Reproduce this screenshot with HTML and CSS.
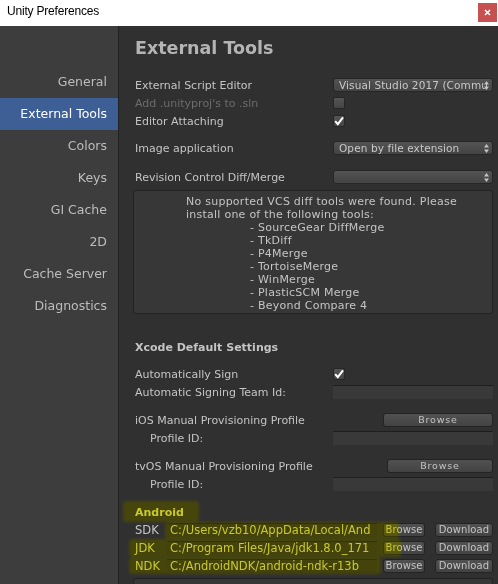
FILE: index.html
```html
<!DOCTYPE html>
<html>
<head>
<meta charset="utf-8">
<title>Unity Preferences</title>
<link rel="stylesheet" href="styles.css">
</head>
<body>
<div class="window">
  <div class="titlebar">
    <span class="title">Unity Preferences</span>
    <div class="close"><svg width="7" height="7" viewBox="0 0 7 7"><path d="M1 1L6 6M6 1L1 6" stroke="#fff" stroke-width="1.6"/></svg></div>
  </div>
  <div class="main">
    <nav class="sidebar">
      <div class="nav">General</div>
      <div class="nav active">External Tools</div>
      <div class="nav">Colors</div>
      <div class="nav">Keys</div>
      <div class="nav">GI Cache</div>
      <div class="nav">2D</div>
      <div class="nav">Cache Server</div>
      <div class="nav">Diagnostics</div>
    </nav>
    <section class="content">
      <h1 class="heading">External Tools</h1>

      <div class="row first">
        <span class="label">External Script Editor</span>
        <div class="ctrl"><div class="popup">Visual Studio 2017 (Commu<svg class="arrows" width="5" height="9" viewBox="0 0 5 9"><path d="M2.5 0L5 3.5H0Z M2.5 9L5 5.5H0Z" fill="#c4c4c4"/></svg></div></div>
      </div>
      <div class="row">
        <span class="label disabled">Add .unityproj's to .sln</span>
        <div class="ctrl"><div class="check"></div></div>
      </div>
      <div class="row">
        <span class="label">Editor Attaching</span>
        <div class="ctrl"><div class="check"><svg width="12" height="12" viewBox="0 0 12 12"><path d="M2.2 6.2L4.8 9.2L10 2.4" stroke="#fff" stroke-width="2" fill="none"/></svg></div></div>
      </div>

      <div class="row gap9">
        <span class="label">Image application</span>
        <div class="ctrl"><div class="popup">Open by file extension<svg class="arrows" width="5" height="9" viewBox="0 0 5 9"><path d="M2.5 0L5 3.5H0Z M2.5 9L5 5.5H0Z" fill="#c4c4c4"/></svg></div></div>
      </div>
      <div class="row gap11">
        <span class="label">Revision Control Diff/Merge</span>
        <div class="ctrl"><div class="popup"><svg class="arrows" width="5" height="9" viewBox="0 0 5 9"><path d="M2.5 0L5 3.5H0Z M2.5 9L5 5.5H0Z" fill="#c4c4c4"/></svg></div></div>
      </div>

      <div class="helpbox">
        <div>No supported VCS diff tools were found. Please</div>
        <div>install one of the following tools:</div>
        <div class="tool">- SourceGear DiffMerge</div>
        <div class="tool">- TkDiff</div>
        <div class="tool">- P4Merge</div>
        <div class="tool">- TortoiseMerge</div>
        <div class="tool">- WinMerge</div>
        <div class="tool">- PlasticSCM Merge</div>
        <div class="tool">- Beyond Compare 4</div>
      </div>

      <div class="row section-title xcode">Xcode Default Settings</div>
      <div class="row gap9">
        <span class="label">Automatically Sign</span>
        <div class="ctrl"><div class="check"><svg width="12" height="12" viewBox="0 0 12 12"><path d="M2.2 6.2L4.8 9.2L10 2.4" stroke="#fff" stroke-width="2" fill="none"/></svg></div></div>
      </div>
      <div class="row">
        <span class="label">Automatic Signing Team Id:</span>
        <div class="ctrl"><div class="field"></div></div>
      </div>
      <div class="row gap10">
        <span class="label">iOS Manual Provisioning Profile</span>
        <div class="ctrl"><div class="button browse-ios">Browse</div></div>
      </div>
      <div class="row">
        <span class="label indent">Profile ID:</span>
        <div class="ctrl"><div class="field"></div></div>
      </div>
      <div class="row gap10">
        <span class="label">tvOS Manual Provisioning Profile</span>
        <div class="ctrl"><div class="button browse-tvos">Browse</div></div>
      </div>
      <div class="row">
        <span class="label indent">Profile ID:</span>
        <div class="ctrl"><div class="field"></div></div>
      </div>

      <div class="row section-title gap10">Android</div>
      <div class="row">
        <span class="alabel">SDK</span>
        <div class="field path">C:/Users/vzb10/AppData/Local/And</div>
        <div class="button small browse">Browse</div>
        <div class="button small download">Download</div>
      </div>
      <div class="row">
        <span class="alabel">JDK</span>
        <div class="field path">C:/Program Files/Java/jdk1.8.0_171</div>
        <div class="button small browse">Browse</div>
        <div class="button small download">Download</div>
      </div>
      <div class="row">
        <span class="alabel">NDK</span>
        <div class="field path">C:/AndroidNDK/android-ndk-r13b</div>
        <div class="button small browse">Browse</div>
        <div class="button small download">Download</div>
      </div>
      <div class="bottombox"></div>
    </section>
  </div>

  <div class="highlights">
    <div class="hl hl-title"></div>
    <div class="hl hl-sdk"></div>
    <div class="hl hl-jdk"></div>
    <div class="hl hl-ndk"></div>
  </div>
</div>
</body>
</html>
```

FILE: styles.css
```css
html, body {
  margin: 0;
  padding: 0;
  background: #303030;
}
.window {
  position: relative;
  width: 498px;
  height: 584px;
  overflow: hidden;
  font-family: "DejaVu Sans", "Liberation Sans", sans-serif;
}
.titlebar {
  height: 26px;
  background: #ffffff;
  display: flex;
  align-items: flex-start;
  justify-content: space-between;
  padding-left: 7px;
  padding-right: 1px;
}
.title {
  font-family: "Liberation Sans", sans-serif;
  font-size: 12px;
  letter-spacing: -0.2px;
  color: #000;
  line-height: 22px;
}
.close {
  margin-top: 3px;
  width: 19px;
  height: 19px;
  background: #c75050;
  display: flex;
  align-items: center;
  justify-content: center;
}
.main {
  display: flex;
  height: 558px;
  background: #303030;
}
.sidebar {
  width: 118px;
  flex: none;
  background: #3d3d3d;
  border-right: 1px solid #222222;
  padding-top: 40px;
}
.nav {
  height: 32px;
  line-height: 32px;
  text-align: right;
  padding-right: 11px;
  font-size: 12.5px;
  color: #bdbdbd;
  white-space: nowrap;
}
.nav.active {
  background: #3e5f96;
  color: #ffffff;
}
.content {
  flex: 1;
  padding: 0 5px 0 16px;
  min-width: 0;
}
.heading {
  margin: 0;
  height: 44px;
  line-height: 44px;
  font-size: 17.5px;
  font-weight: bold;
  color: #b4b4b4;
  white-space: nowrap;
}
.row {
  display: flex;
  align-items: center;
  height: 18px;
}
.row.first { margin-top: 6px; }
.row.gap9 { margin-top: 9px; }
.row.gap10 { margin-top: 10px; }
.row.gap11 { margin-top: 11px; }
.label {
  width: 198px;
  flex: none;
  font-size: 11px;
  color: #c4c4c4;
  white-space: nowrap;
}
.label.disabled { color: #6c6c6c; }
.label.indent { padding-left: 15px; box-sizing: border-box; }
.ctrl {
  flex: 1;
  display: flex;
  align-items: center;
  min-width: 0;
}
.popup {
  position: relative;
  width: 100%;
  height: 14px;
  box-sizing: border-box;
  border: 1px solid #262626;
  border-radius: 3px;
  background: linear-gradient(#535353, #444444);
  font-size: 10.5px;
  line-height: 12px;
  color: #c8c8c8;
  padding-left: 5px;
  white-space: nowrap;
  letter-spacing: 0.1px;
}
.arrows {
  position: absolute;
  right: 3px;
  top: 2px;
}
.check {
  width: 12px;
  height: 12px;
  box-sizing: border-box;
  border: 1px solid #262626;
  border-radius: 2px;
  background: linear-gradient(#555555, #454545);
  display: flex;
  align-items: center;
  justify-content: center;
}
.check svg { margin: -1px; }
.field {
  width: 100%;
  height: 14px;
  box-sizing: border-box;
  background: #393939;
  border-top: 1px solid #1e1e1e;
}
.button {
  height: 14px;
  box-sizing: border-box;
  border: 1px solid #232323;
  border-radius: 3px;
  background: linear-gradient(#515151, #434343);
  font-size: 9.5px;
  line-height: 12px;
  letter-spacing: 0.8px;
  color: #c4c4c4;
  text-align: center;
  white-space: nowrap;
  flex: none;
}
.browse-ios { margin-left: 50px; width: 110px; }
.browse-tvos { margin-left: 54px; width: 106px; }
.helpbox {
  margin-top: 4px;
  margin-left: -2px;
  width: 360px;
  height: 124px;
  box-sizing: border-box;
  border: 1px solid #222222;
  border-radius: 3px;
  background: #373737;
  padding: 4px 0 0 52px;
  font-size: 11px;
  line-height: 13px;
  letter-spacing: 0.25px;
  color: #c4c4c4;
  white-space: nowrap;
}
.helpbox .tool { padding-left: 64px; }
.section-title {
  font-size: 11px;
  font-weight: bold;
  color: #c4c4c4;
  white-space: nowrap;
}
.section-title.xcode { margin-top: 24px; }
.alabel {
  width: 32px;
  flex: none;
  font-size: 11.5px;
  color: #c4c4c4;
}
.field.path {
  width: 210px;
  flex: none;
  font-size: 11.5px;
  line-height: 12px;
  color: #c4c4c4;
  padding-left: 3px;
  white-space: nowrap;
  background: #2e2e2e;
}
.button.small {
  font-size: 10px;
  letter-spacing: 0.1px;
}
.button.browse { margin-left: 6px; width: 42px; }
.button.download { margin-left: 10px; width: 58px; }
.bottombox {
  margin-top: 3px;
  margin-left: -2px;
  width: 360px;
  height: 20px;
  box-sizing: border-box;
  border: 1px solid #222222;
  border-radius: 3px;
  background: #373737;
}
.highlights {
  position: absolute;
  left: 0;
  top: 0;
  width: 498px;
  height: 584px;
  pointer-events: none;
}
.hl {
  position: absolute;
  background: rgb(140, 140, 30);
  mix-blend-mode: hard-light;
  border-radius: 4px;
  filter: blur(1px);
}
.hl-title { left: 123px; top: 501px; width: 76px; height: 21px; }
.hl-sdk { left: 165px; top: 522px; width: 234px; height: 17px; }
.hl-jdk { left: 129px; top: 539px; width: 272px; height: 18px; }
.hl-ndk { left: 129px; top: 557px; width: 252px; height: 17px; }
```
